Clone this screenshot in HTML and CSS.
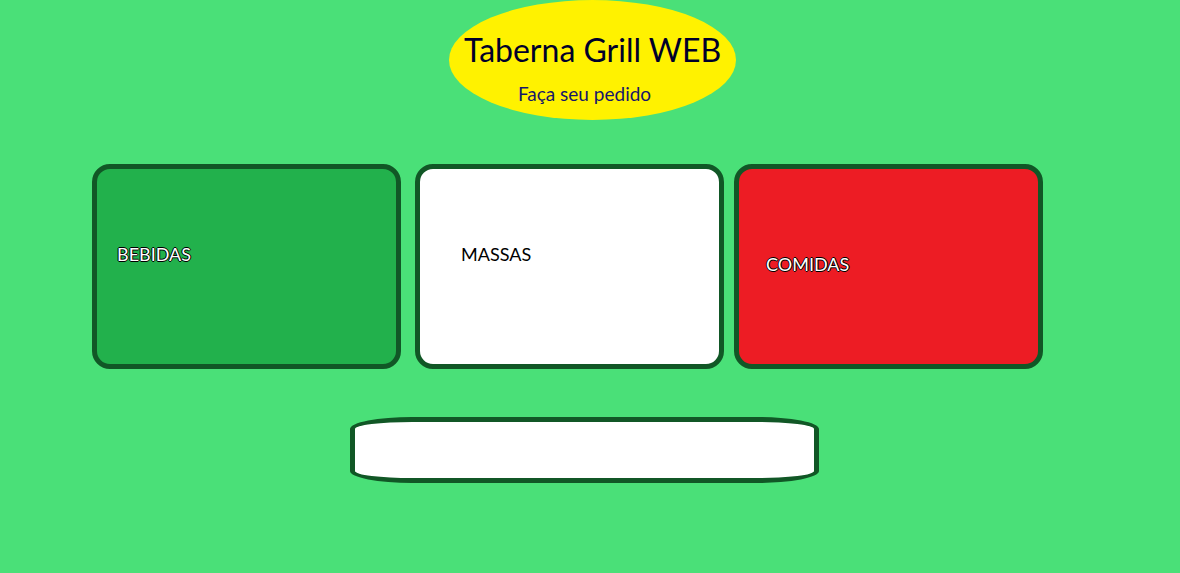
FILE: index.html
```html
<!DOCTYPE html>
<html lang="pt-BR">
<head>
<meta charset="utf-8">
<title>Taberna Grill WEB</title>
<link rel="stylesheet" href="styles.css">
</head>
<body>
  <header class="brand">
    <h1 class="brand-title">Taberna Grill WEB</h1>
    <p class="brand-sub">Faça seu pedido</p>
  </header>
  <main class="menu">
    <a class="card card-drinks" href="#bebidas"><span class="card-label label-outline">BEBIDAS</span></a>
    <a class="card card-pasta" href="#massas"><span class="card-label">MASSAS</span></a>
    <a class="card card-food" href="#comidas"><span class="card-label label-outline">COMIDAS</span></a>
  </main>
  <div class="order-bar"></div>
</body>
</html>
```

FILE: styles.css
```css
html, body {
  margin: 0;
  padding: 0;
}
body {
  background: #4ae078;
  font-family: Lato, "Open Sans", sans-serif;
  height: 573px;
  overflow: hidden;
}
.brand {
  width: 287px;
  height: 120px;
  margin-left: 449px;
  border-radius: 50%;
  background: #fff200;
  box-sizing: border-box;
  padding-top: 32px;
  text-align: center;
}
.brand-title {
  margin: 0;
  font-size: 32px;
  line-height: 36px;
  font-weight: 400;
  color: #00002a;
}
.brand-sub {
  margin: 15px 0 0;
  padding-right: 16px;
  font-size: 19px;
  line-height: 22px;
  color: #16166a;
}
.menu {
  display: flex;
  gap: 10px;
  margin: 44px 0 0 92px;
}
.card {
  display: block;
  width: 309px;
  height: 205px;
  box-sizing: border-box;
  border: 5px solid #115726;
  border-radius: 18px;
  text-decoration: none;
  font-size: 18px;
  line-height: 22px;
}
.card-drinks {
  background: #22b14c;
  margin-right: 4px;
  padding: 74px 0 0 20px;
}
.card-pasta {
  background: #ffffff;
  padding: 74px 0 0 41px;
}
.card-food {
  background: #ed1c24;
  padding: 84px 0 0 27px;
}
.card-label {
  color: #000;
}
.label-outline {
  color: #fff;
  text-shadow: 1px 0 #000, -1px 0 #000, 0 1px #000, 0 -1px #000;
}
.order-bar {
  width: 469px;
  height: 66px;
  box-sizing: border-box;
  margin: 48px 0 0 350px;
  background: #fff;
  border: 5px solid #115726;
  border-radius: 62px / 12px;
}
```
